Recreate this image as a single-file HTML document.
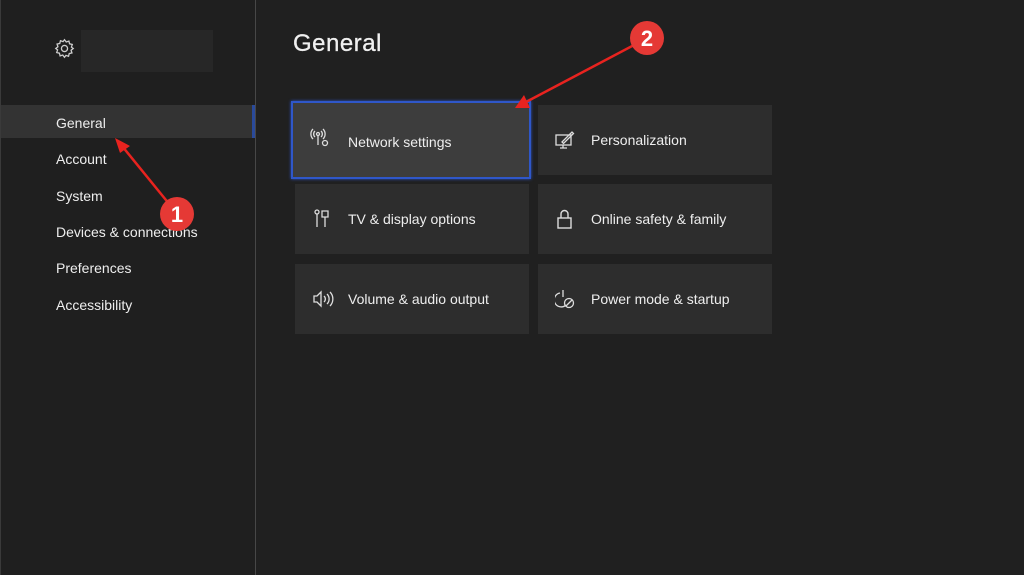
<!DOCTYPE html>
<html><head><meta charset="utf-8"><style>
*{margin:0;padding:0;box-sizing:border-box}
body{width:1024px;height:575px;background:#202020;font-family:"Liberation Sans",sans-serif;color:#e8e8e8;position:relative;overflow:hidden}
.side{position:absolute;left:0;top:0;width:255px;height:575px;background:#1f1f1f;border-left:1px solid #3a3a3a}
.div{position:absolute;left:255px;top:0;width:1px;height:575px;background:#474747}
.ph{position:absolute;left:81px;top:30px;width:132px;height:42px;background:#272727}
.nav{position:absolute;left:56px;font-size:14px;color:#eee}
.sel{position:absolute;left:1px;top:105px;width:254px;height:33px;background:#333}
.selb{position:absolute;left:252px;top:105px;width:3px;height:33px;background:#2a4a9a}
h1{position:absolute;left:293px;top:30px;font-size:24px;font-weight:normal;color:#f0f0f0;letter-spacing:.5px;-webkit-text-stroke:.3px #f0f0f0}
.t{position:absolute;width:234px;height:70px;background:#2d2d2d;font-size:14px;color:#eee}
.t span{position:absolute;left:53px;top:27px}
.t svg{position:absolute;left:17px;top:25px}
.f{background:#3d3d3d;border:2px solid #2f57c9;box-shadow:0 0 3px #2f57c9}
</style></head><body>
<div class="side"></div>
<div class="div"></div>
<svg style="position:absolute;left:54px;top:38px" width="21" height="21" viewBox="0 0 24 24" fill="none" stroke="#ccc" stroke-width="1.5"><circle cx="12" cy="12" r="3.5"/><path d="M12 2l2 2.5 3-1 .8 3.1 3.1.8-1 3L22 12l-2.5 2 1 3-3.1.8-.8 3.1-3-1L12 22l-2-2.5-3 1-.8-3.1-3.1-.8 1-3L2 12l2.5-2-1-3 3.1-.8.8-3.1 3 1z"/></svg>
<div class="ph"></div>
<div class="sel"></div><div class="selb"></div>
<div class="nav" style="top:115px">General</div>
<div class="nav" style="top:151px">Account</div>
<div class="nav" style="top:188px">System</div>
<div class="nav" style="top:224px">Devices &amp; connections</div>
<div class="nav" style="top:260px">Preferences</div>
<div class="nav" style="top:297px">Accessibility</div>
<h1>General</h1>
<div class="t f" style="left:291px;top:101px;width:240px;height:78px"><svg width="22" height="20" viewBox="0 0 22 20" fill="none" stroke="#ddd" stroke-width="1.3"><circle cx="8" cy="6" r="1.5"/><path d="M8 8v9M5 3a4 4 0 000 6M11 3a4 4 0 010 6M3 1a7 7 0 000 10M13 1a7 7 0 010 10"/><circle cx="15" cy="15" r="2.5"/></svg><span style="left:55px;top:31px">Network settings</span></div>
<div class="t" style="left:538px;top:105px"><svg width="20" height="20" viewBox="0 0 20 20" fill="none" stroke="#ddd" stroke-width="1.3"><rect x="1" y="5" width="15" height="10"/><path d="M8 15v3M5 18h7M7 12l10-10 1.5 1.5-10 10z"/></svg><span>Personalization</span></div>
<div class="t" style="left:295px;top:184px"><svg width="20" height="20" viewBox="0 0 20 20" fill="none" stroke="#ddd" stroke-width="1.3"><circle cx="5" cy="3" r="2"/><path d="M5 5v13M10 2h6v6h-6zM13 8v10"/></svg><span>TV &amp; display options</span></div>
<div class="t" style="left:538px;top:184px"><svg width="20" height="20" viewBox="0 0 20 20" fill="none" stroke="#ddd" stroke-width="1.4"><rect x="3" y="9" width="13" height="10"/><path d="M6 9V5a3.5 3.5 0 017 0v4"/></svg><span>Online safety &amp; family</span></div>
<div class="t" style="left:295px;top:264px"><svg width="22" height="20" viewBox="0 0 22 20" fill="none" stroke="#ddd" stroke-width="1.3"><path d="M2 7h3l4-4v14l-4-4H2z M12 7a4 4 0 010 6M15 5a7 7 0 010 10M18 3a10 10 0 010 14"/></svg><span>Volume &amp; audio output</span></div>
<div class="t" style="left:538px;top:264px"><svg width="22" height="20" viewBox="0 0 22 20" fill="none" stroke="#ddd" stroke-width="1.3"><path d="M5 4a7 7 0 106 12M8 1v7"/><circle cx="14" cy="14" r="4.5"/><path d="M11 17l6-6"/></svg><span>Power mode &amp; startup</span></div>
<svg style="position:absolute;left:0;top:0" width="1024" height="575">
<g stroke="#e8231f" stroke-width="2.5" fill="#e8231f">
<line x1="170" y1="205" x2="122" y2="146"/><polygon points="115,138 130,146 120,153" stroke="none"/>
<line x1="636" y1="44" x2="526" y2="102"/><polygon points="515,108 524,95 530,108" stroke="none"/>
</g>
<circle cx="177" cy="214" r="17" fill="#e53935"/><text x="177" y="222" fill="#fff" font-size="22" font-weight="bold" text-anchor="middle" font-family="Liberation Sans">1</text>
<circle cx="647" cy="38" r="17" fill="#e53935"/><text x="647" y="46" fill="#fff" font-size="22" font-weight="bold" text-anchor="middle" font-family="Liberation Sans">2</text>
</svg>
</body></html>
